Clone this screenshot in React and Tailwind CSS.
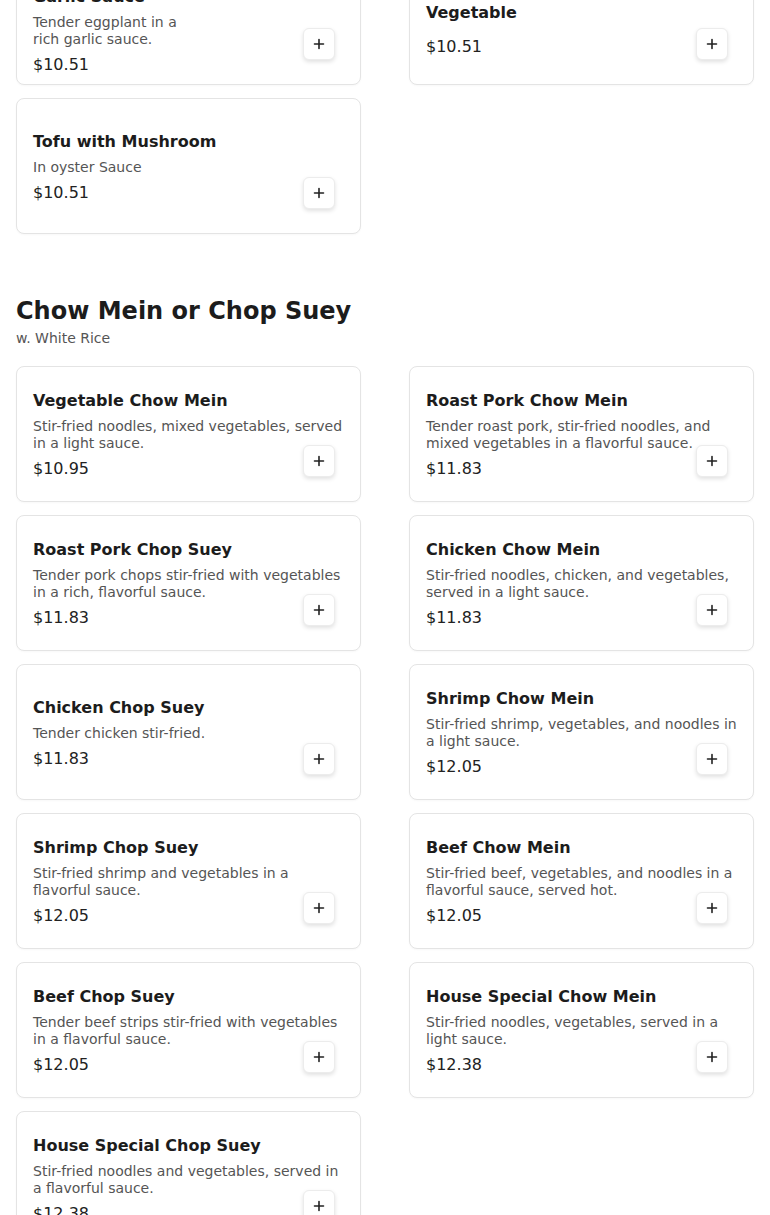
import React from 'react';

const topItems = [
  { name: 'Eggplant with Garlic Sauce', desc: 'Tender eggplant in a rich garlic sauce.', price: '10.51', narrow: true },
  { name: 'Sautéed Mixed Chinese\nVegetable', desc: '', price: '10.51' },
  { name: 'Tofu with Mushroom', desc: 'In oyster Sauce', price: '10.51' },
];

const chowMein = [
  { name: 'Vegetable Chow Mein', desc: 'Stir-fried noodles, mixed vegetables, served in a light sauce.', price: '10.95' },
  { name: 'Roast Pork Chow Mein', desc: 'Tender roast pork, stir-fried noodles, and mixed vegetables in a flavorful sauce.', price: '11.83' },
  { name: 'Roast Pork Chop Suey', desc: 'Tender pork chops stir-fried with vegetables in a rich, flavorful sauce.', price: '11.83' },
  { name: 'Chicken Chow Mein', desc: 'Stir-fried noodles, chicken, and vegetables, served in a light sauce.', price: '11.83' },
  { name: 'Chicken Chop Suey', desc: 'Tender chicken stir-fried.', price: '11.83' },
  { name: 'Shrimp Chow Mein', desc: 'Stir-fried shrimp, vegetables, and noodles in a light sauce.', price: '12.05' },
  { name: 'Shrimp Chop Suey', desc: 'Stir-fried shrimp and vegetables in a flavorful sauce.', price: '12.05' },
  { name: 'Beef Chow Mein', desc: 'Stir-fried beef, vegetables, and noodles in a flavorful sauce, served hot.', price: '12.05' },
  { name: 'Beef Chop Suey', desc: 'Tender beef strips stir-fried with vegetables in a flavorful sauce.', price: '12.05' },
  { name: 'House Special Chow Mein', desc: 'Stir-fried noodles, vegetables, served in a light sauce.', price: '12.38' },
  { name: 'House Special Chop Suey', desc: 'Stir-fried noodles and vegetables, served in a flavorful sauce.', price: '12.38' },
];

function PlusIcon() {
  return (
    <svg width="12" height="12" viewBox="0 0 12 12" fill="none" stroke="#222" strokeWidth="1.6" strokeLinecap="round">
      <path d="M6 1.5v9M1.5 6h9" />
    </svg>
  );
}

function ItemCard({ item }) {
  return (
    <div className="relative flex h-[136px] flex-col justify-center rounded-lg border border-[#e4e4e4] bg-white px-4 pt-[2px] shadow-[0_1px_2px_rgba(0,0,0,0.03)]">
      <div className={item.narrow ? 'flex max-w-[160px] flex-col pt-[2px]' : 'flex flex-col'}>
        <h3 className="mb-[5px] whitespace-pre-line text-base font-bold leading-6 text-[#1c1c1c]">{item.name}</h3>
        <p className="text-sm leading-[17px] text-[#555]">{item.desc}</p>
        <p className="mt-[5px] text-base leading-6 text-[#222]">${item.price}</p>
      </div>
      <button className="absolute bottom-6 right-[25px] flex h-8 w-8 items-center justify-center rounded-md border border-[#ececec] bg-white shadow-[0_2px_4px_rgba(0,0,0,0.12)]">
        <PlusIcon />
      </button>
    </div>
  );
}

export default function App() {
  return (
    <div className="min-h-screen bg-white px-4 pb-10" style={{ fontFamily: '"DejaVu Sans", sans-serif' }}>
      <div className="-mt-[51px] grid grid-cols-2 gap-x-12 gap-y-[13px]">
        {topItems.map((item) => (
          <ItemCard key={item.name} item={item} />
        ))}
      </div>

      <section className="mt-[61px]">
        <h2 className="text-2xl font-bold leading-8 text-[#1c1c1c]">Chow Mein or Chop Suey</h2>
        <p className="mt-px text-sm leading-5 text-[#555]">w. White Rice</p>
        <div className="mt-[18px] grid grid-cols-2 gap-x-12 gap-y-[13px]">
          {chowMein.map((item) => (
            <ItemCard key={item.name} item={item} />
          ))}
        </div>
      </section>
    </div>
  );
}
